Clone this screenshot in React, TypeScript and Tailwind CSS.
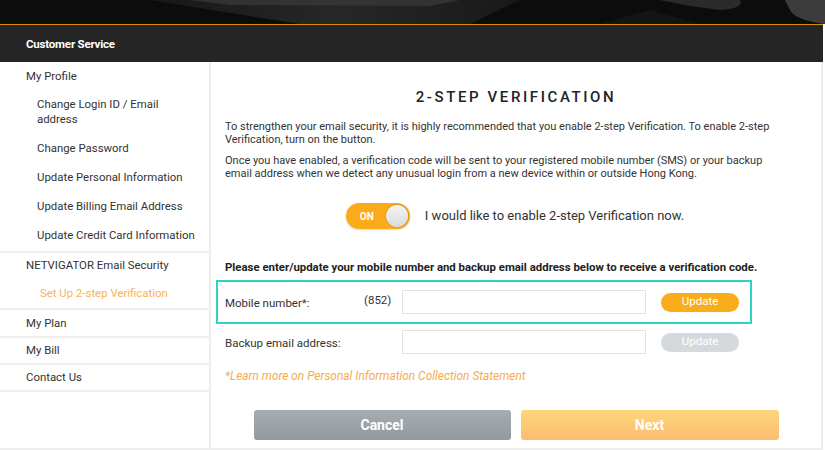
import React from "react";

const font = { fontFamily: "Roboto, 'Liberation Sans', sans-serif" };

function Banner() {
  return (
    <div className="h-[24px] bg-[#0b0b0b] overflow-hidden">
      <svg width="825" height="24" viewBox="0 0 825 24">
        <defs>
          <linearGradient id="band" x1="0" y1="0" x2="1" y2="0">
            <stop offset="0" stopColor="#1a1a1a" />
            <stop offset="0.5" stopColor="#2e2e2e" />
            <stop offset="1" stopColor="#1c1c1c" />
          </linearGradient>
        </defs>
        <rect width="825" height="24" fill="#0c0c0c" />
        <path d="M150 0 L520 0 L470 24 L300 24 Z" fill="url(#band)" opacity="0.8" />
        <path d="M190 0 L460 0 L430 6 L230 5 Z" fill="#3a3a3a" opacity="0.7" />
        <path d="M660 0 L740 0 Q745 8 720 10 L690 6 Z" fill="#2b2b2b" />
        <path d="M785 0 L825 0 L825 24 Q795 20 790 10 Z" fill="#3c3c3c" />
        <path d="M600 24 L650 10 L700 24 Z" fill="#141414" />
      </svg>
    </div>
  );
}

function Sep() {
  return <div className="h-[2px] bg-[#efefef]" />;
}

const subItems = [
  ["Change Login ID / Email", "address"],
  ["Change Password"],
  ["Update Personal Information"],
  ["Update Billing Email Address"],
  ["Update Credit Card Information"],
];

function Sidebar() {
  return (
    <div className="w-[211px] shrink-0 border-r-2 border-[#eeeeee] text-[11.4px] leading-[15px] text-[#333]">
      <div className="pl-[26px] pt-[7px] pb-[1px]">
        <div className="pb-[6px]">My Profile</div>
        {subItems.map((lines) => (
          <div key={lines[0]} className="pl-[11px] py-[7px]">
            {lines.map((l) => (
              <div key={l}>{l}</div>
            ))}
          </div>
        ))}
      </div>
      <Sep />
      <div className="pl-[26px] pt-[5px] pb-[7px]">
        <div>NETVIGATOR Email Security</div>
        <div className="pl-[14px] pt-[13px] text-[#fbb24f]">Set Up 2-step Verification</div>
      </div>
      <Sep />
      <div className="pl-[26px] h-[26px] flex items-center">My Plan</div>
      <Sep />
      <div className="pl-[26px] h-[25px] flex items-center">My Bill</div>
      <Sep />
      <div className="pl-[26px] h-[25px] flex items-center">Contact Us</div>
      <Sep />
    </div>
  );
}

function Toggle() {
  return (
    <div className="w-[64px] h-[26px] rounded-full bg-[#fbab1a] flex items-center justify-between pl-[14px] pr-[2px] shadow-[0_1px_2px_rgba(0,0,0,0.15)]">
      <span className="text-white text-[10px] font-bold">ON</span>
      <span className="w-[22px] h-[22px] rounded-full bg-gradient-to-b from-[#f4f4f4] to-[#d9dbdd] shadow-[0_0_2px_rgba(0,0,0,0.3)]" />
    </div>
  );
}

function Row({ label, prefix, active }: { label: string; prefix?: string; active: boolean }) {
  return (
    <div className="flex items-center text-[11.5px] text-[#333]">
      <div className="w-[139px] pt-[3px]">{label}</div>
      <div className="w-[38px] self-start pt-[2px]">{prefix}</div>
      <div className="w-[244px] h-[24px] border border-[#e3e3e3] bg-white" />
      <div
        className={
          "ml-[15px] w-[78px] h-[19px] rounded-full flex items-center justify-center text-white text-[11.5px] " +
          (active ? "bg-[#f9ad1b]" : "bg-[#d6d9db]")
        }
      >
        Update
      </div>
    </div>
  );
}

function Main() {
  return (
    <div className="w-[612px] shrink-0 border-r-2 border-[#eeeeee] px-[14px] pt-[25px] text-[#333]">
      <h1 className="text-center text-[15px] leading-[20px] font-medium tracking-[2.6px] text-[#222]">
        2-STEP VERIFICATION
      </h1>
      <div className="w-[555px]">
        <p className="mt-[13px] text-[11px] leading-[13px]">
          To strengthen your email security, it is highly recommended that you enable 2-step Verification. To enable
          2-step Verification, turn on the button.
        </p>
        <p className="mt-[9px] text-[11px] leading-[12.5px]">
          Once you have enabled, a verification code will be sent to your registered mobile number (SMS) or your backup
          email address when we detect any unusual login from a new device within or outside Hong Kong.
        </p>
      </div>
      <div className="mt-[23px] flex items-center justify-center gap-[15px] pr-[2px]">
        <Toggle />
        <span className="text-[13px] text-[#333]">I would like to enable 2-step Verification now.</span>
      </div>
      <p className="mt-[32px] text-[11.4px] leading-[13px] font-bold text-[#222]">
        Please enter/update your mobile number and backup email address below to receive a verification code.
      </p>
      <div className="mt-[6px] -ml-[9px] w-[536px] border-2 border-[#2fd3c6] pl-[7px] py-[8px]">
        <Row label="Mobile number*:" prefix="(852)" active />
      </div>
      <div className="mt-[6px]">
        <Row label="Backup email address:" active={false} />
      </div>
      <p className="mt-[15px] text-[11.9px] leading-[14px] italic text-[#f7ab4c]">
        *Learn more on Personal Information Collection Statement
      </p>
      <div className="mt-[27px] flex justify-center gap-[10px]">
        <div className="w-[257px] h-[30px] rounded-[3px] bg-gradient-to-b from-[#a7acb1] to-[#93999e] flex items-center justify-center text-white text-[14px] font-bold">
          Cancel
        </div>
        <div className="w-[258px] h-[30px] rounded-[3px] bg-gradient-to-b from-[#fed57b] to-[#fbbd6e] flex items-center justify-center text-white text-[14px] font-bold">
          Next
        </div>
      </div>
    </div>
  );
}

export default function App() {
  return (
    <div className="w-[825px] h-[450px] bg-white overflow-hidden" style={font}>
      <Banner />
      <div className="w-[823px] h-[38px] border-t border-[#d48a0a] bg-[#252525] flex items-center pl-[26px] pt-[2px]">
        <span className="text-white text-[11.5px] font-bold tracking-[-0.2px]">Customer Service</span>
      </div>
      <div className="flex h-[388px] border-b-2 border-[#eeeeee] w-[823px]">
        <Sidebar />
        <Main />
      </div>
    </div>
  );
}
